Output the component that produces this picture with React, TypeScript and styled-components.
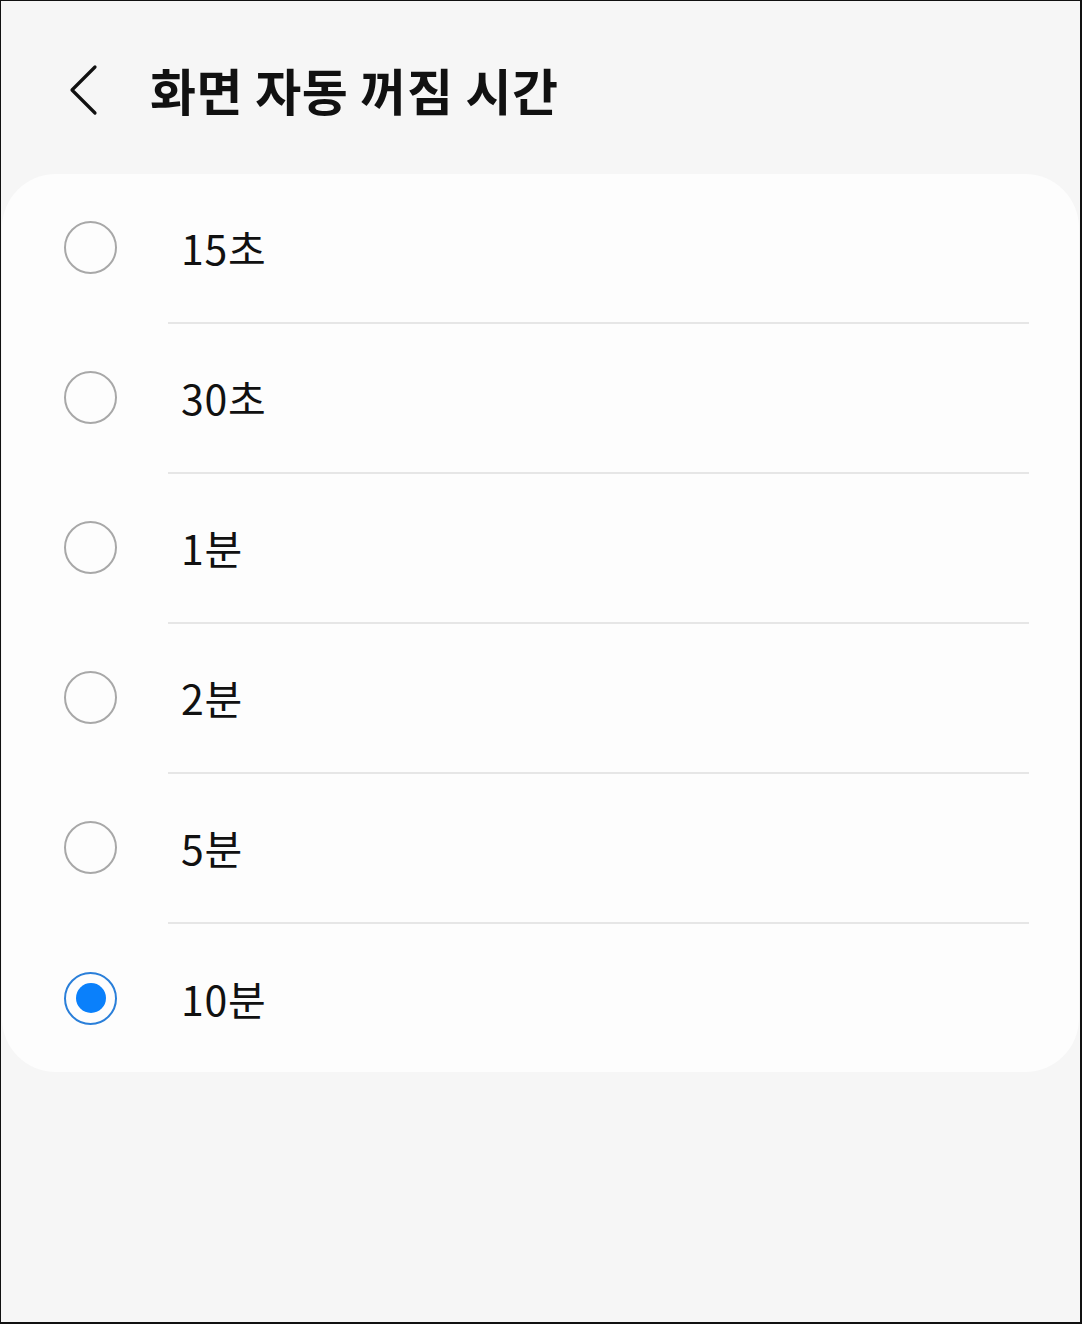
import React, { useState } from "react";
import styled, { createGlobalStyle } from "styled-components";

const GlobalStyle = createGlobalStyle`
  html, body {
    margin: 0;
    padding: 0;
    background: #f6f6f6;
  }
  body {
    font-family: "Noto Sans CJK KR", "Noto Sans", sans-serif;
  }
`;

const options = ["15초", "30초", "1분", "2분", "5분", "10분"];

function App() {
  const [selected, setSelected] = useState("10분");

  return (
    <>
      <GlobalStyle />
      <Frame>
        <Header>
          <BackButton aria-label="뒤로">
            <svg width="32" height="52" viewBox="0 0 32 52" fill="none">
              <path
                d="M28 3 L5 26 L28 49"
                stroke="#111"
                strokeWidth="3.2"
                strokeLinecap="round"
                strokeLinejoin="round"
              />
            </svg>
          </BackButton>
          <Title>화면 자동 꺼짐 시간</Title>
        </Header>
        <Card>
          {options.map((opt, i) => (
            <Row
              key={opt}
              $last={i === options.length - 1}
              onClick={() => setSelected(opt)}
            >
              <Radio $checked={selected === opt} />
              <Label>{opt}</Label>
            </Row>
          ))}
        </Card>
      </Frame>
    </>
  );
}

export default App;

const Frame = styled.div`
  box-sizing: border-box;
  width: 1082px;
  height: 1324px;
  border: 1px solid #111;
  border-right-width: 2px;
  border-bottom-width: 2px;
  background: #f6f6f6;
  padding: 0 1px;
  display: flex;
  flex-direction: column;
`;

const Header = styled.div`
  box-sizing: border-box;
  height: 173px;
  padding: 4px 0 0 65px;
  display: flex;
  align-items: center;
`;

const BackButton = styled.button`
  border: none;
  background: none;
  padding: 0;
  width: 32px;
  height: 52px;
  display: flex;
  cursor: pointer;
`;

const Title = styled.h1`
  margin: 0 0 2px 51px;
  font-size: 50px;
  font-weight: 700;
  color: #111;
  letter-spacing: 0.6px;
  line-height: 1;
`;

const Card = styled.div`
  background: #fdfdfd;
  border-radius: 54px;
  overflow: hidden;
  display: flex;
  flex-direction: column;
`;

const Row = styled.div<{ $last: boolean }>`
  position: relative;
  box-sizing: border-box;
  height: ${(p) => (p.$last ? "148px" : "150px")};
  padding-left: 62px;
  padding-bottom: ${(p) => (p.$last ? "0" : "3px")};
  display: flex;
  align-items: center;
  cursor: pointer;

  &::after {
    content: "";
    display: ${(p) => (p.$last ? "none" : "block")};
    position: absolute;
    left: 166px;
    right: 50px;
    bottom: 0;
    height: 2px;
    background: #e6e6e6;
  }
`;

const Radio = styled.span<{ $checked: boolean }>`
  box-sizing: border-box;
  width: 53px;
  height: 53px;
  border-radius: 50%;
  border: 2.5px solid ${(p) => (p.$checked ? "#2a7fd9" : "#a8a8a8")};
  display: flex;
  align-items: center;
  justify-content: center;
  flex-shrink: 0;

  &::before {
    content: "";
    display: ${(p) => (p.$checked ? "block" : "none")};
    width: 30px;
    height: 30px;
    border-radius: 50%;
    background: #0a80fb;
  }
`;

const Label = styled.span`
  margin-left: 64px;
  font-size: 41px;
  font-weight: 400;
  color: #111;
  letter-spacing: 0.8px;
  line-height: 1;
`;
